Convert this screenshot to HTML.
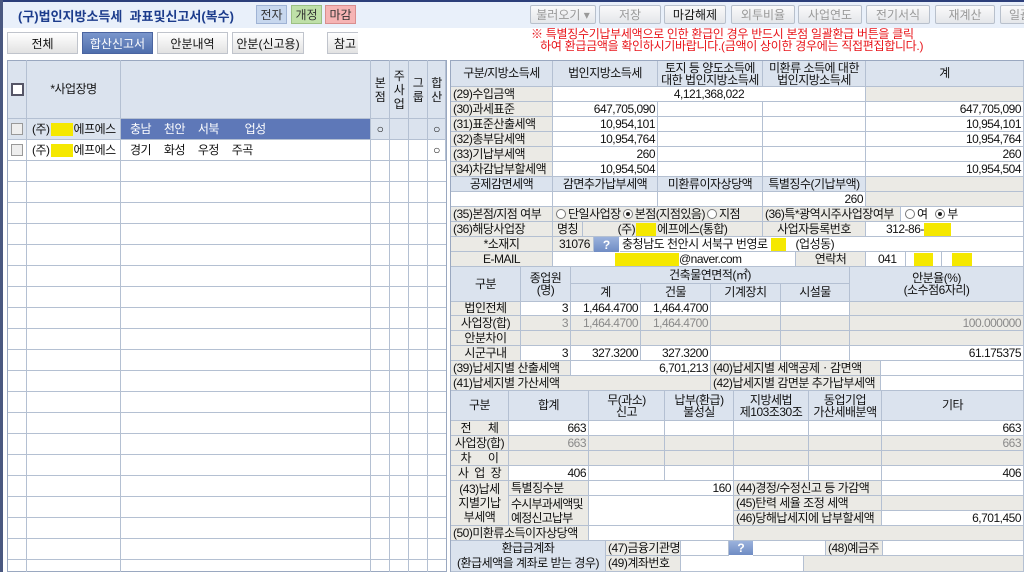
<!DOCTYPE html>
<html><head><meta charset="utf-8"><style>
*{margin:0;padding:0;box-sizing:border-box}
body{width:1024px;height:572px;overflow:hidden;background:#fff;position:relative;font-family:"Liberation Sans","Noto Sans CJK KR",sans-serif;font-size:12px;color:#111}
.a{position:absolute}
.c{position:absolute;display:flex;align-items:center;justify-content:center;border-right:1px solid #b4c0d2;border-bottom:1px solid #b4c0d2;white-space:nowrap;line-height:13px;overflow:hidden;font-size:12px;letter-spacing:-0.5px}
.l{justify-content:flex-start;padding-left:2px}
.r{justify-content:flex-end;padding-right:2px}
.g{background:#ebeae5}
.h{background:#dbe3ee}
.w{background:#fff}
.gt{color:#8a8a8a}
.ml{white-space:normal;text-align:center;line-height:12px}
.btn{position:absolute;top:5px;height:19px;border:1px solid #b8c0cc;border-radius:2px;background:linear-gradient(#fafafa,#e4e6ea);color:#999;font-size:12px;display:flex;align-items:center;justify-content:center}
.tab{position:absolute;top:32px;height:22px;border:1px solid #c0c4cc;background:linear-gradient(#fff,#e2e2e2);display:flex;align-items:center;justify-content:center;font-size:12px}
.y{display:inline-block;background:#f5e800;height:13px}
.rad{display:inline-block;width:10px;height:10px;border:1px solid #777;border-radius:50%;background:#fff;margin:0 2px;vertical-align:-1px;position:relative}
.rad.on::after{content:"";position:absolute;left:2px;top:2px;width:4px;height:4px;border-radius:50%;background:#222}
.q{position:absolute;background:linear-gradient(#9bb2dc,#6f8cc4);color:#fff;font-weight:bold;display:flex;align-items:center;justify-content:center;font-size:12px}
</style></head><body>
<div class="a" style="left:0;top:0;width:1024px;height:28px;background:#e9f0fa;border-top:2px solid #2c3f7a"></div>
<div class="a" style="left:0;top:0;width:3px;height:572px;background:#4a5880"></div>
<div class="a" style="left:18px;top:6px;font-size:13px;font-weight:bold;color:#1c3c8c">(구)법인지방소득세&nbsp; 과표및신고서(복수)</div>
<div class="a" style="left:256px;top:5px;width:31px;height:19px;background:#c7d7ee;border:1px solid #9fb3d5;display:flex;align-items:center;justify-content:center;color:#333">전자</div>
<div class="a" style="left:291px;top:5px;width:31px;height:19px;background:#bfe0a8;border:1px solid #9cc083;display:flex;align-items:center;justify-content:center;color:#333">개정</div>
<div class="a" style="left:325px;top:5px;width:31px;height:19px;background:#f6b4b4;border:1px solid #d98e8e;display:flex;align-items:center;justify-content:center;color:#333">마감</div>
<div class="btn" style="left:530px;width:66px">불러오기 ▾</div>
<div class="btn" style="left:599px;width:62px">저장</div>
<div class="btn" style="left:664px;width:62px;color:#111">마감해제</div>
<div class="btn" style="left:731px;width:64px">외투비율</div>
<div class="btn" style="left:798px;width:64px">사업연도</div>
<div class="btn" style="left:866px;width:64px">전기서식</div>
<div class="btn" style="left:935px;width:60px">재계산</div>
<div class="btn" style="left:1000px;width:40px">일괄</div>
<div class="a" style="left:531px;top:28px;color:#e8141a;font-size:12px;line-height:12px;letter-spacing:-0.3px">※ 특별징수기납부세액으로 인한 환급인 경우 반드시 본점 일괄환급 버튼을 클릭<br>&nbsp;&nbsp;&nbsp;하여 환급금액을 확인하시기바랍니다.(금액이 상이한 경우에는 직접편집합니다.)</div>
<div class="tab" style="left:7px;width:71px">전체</div>
<div class="tab" style="left:82px;width:71px;background:linear-gradient(#7a96cc,#4f6eac);color:#fff;border-color:#4a64a0">합산신고서</div>
<div class="tab" style="left:157px;width:71px">안분내역</div>
<div class="tab" style="left:232px;width:72px">안분(신고용)</div>
<div class="tab" style="left:327px;width:31px;justify-content:flex-end;padding-right:2px;border-right:none">참고</div>
<div class="a" style="left:7px;top:60px;width:440px;height:512px;border:1px solid #9aa8c0;background:#fff;
background-image:repeating-linear-gradient(to bottom,transparent 0,transparent 20px,#b4c0d2 20px,#b4c0d2 21px);background-position:0 100px"></div>
<div class="a" style="left:26px;top:60px;width:1px;height:512px;background:#b4c0d2"></div>
<div class="a" style="left:120px;top:60px;width:1px;height:512px;background:#b4c0d2"></div>
<div class="a" style="left:370px;top:60px;width:1px;height:512px;background:#b4c0d2"></div>
<div class="a" style="left:389px;top:60px;width:1px;height:512px;background:#b4c0d2"></div>
<div class="a" style="left:408px;top:60px;width:1px;height:512px;background:#b4c0d2"></div>
<div class="a" style="left:427px;top:60px;width:1px;height:512px;background:#b4c0d2"></div>
<div class="c h" style="left:8px;top:61px;width:19px;height:58px"><span style="display:inline-block;width:13px;height:13px;border:2px solid #556;background:#fff"></span></div>
<div class="c h" style="left:27px;top:61px;width:94px;height:58px">*사업장명</div>
<div class="c h" style="left:121px;top:61px;width:250px;height:58px"></div>
<div class="c h ml" style="left:371px;top:61px;width:19px;height:58px;line-height:14px">본<br>점</div>
<div class="c h ml" style="left:390px;top:61px;width:19px;height:58px;line-height:14px">주<br>사<br>업</div>
<div class="c h ml" style="left:409px;top:61px;width:19px;height:58px;line-height:14px">그<br>룹</div>
<div class="c h ml" style="left:428px;top:61px;width:18px;height:58px;line-height:14px">합<br>산</div>
<div class="c h" style="left:8px;top:119px;width:19px;height:21px"><span style="display:inline-block;width:12px;height:12px;border:1px solid #999;background:#eee"></span></div>
<div class="c h l" style="left:27px;top:119px;width:94px;height:21px;padding-left:5px">(주)<span class="y" style="width:22px;margin:0 1px"></span>에프에스</div>
<div class="c l" style="left:121px;top:119px;width:250px;height:21px;background:#5e78b8;color:#fff;padding-left:9px;word-spacing:10px">충남 천안 서북 &nbsp;업성</div>
<div class="c h" style="left:371px;top:119px;width:19px;height:21px">○</div>
<div class="c h" style="left:390px;top:119px;width:19px;height:21px"></div>
<div class="c h" style="left:409px;top:119px;width:19px;height:21px"></div>
<div class="c h" style="left:428px;top:119px;width:18px;height:21px">○</div>
<div class="c w" style="left:8px;top:140px;width:19px;height:21px"><span style="display:inline-block;width:12px;height:12px;border:1px solid #999;background:#eee"></span></div>
<div class="c w l" style="left:27px;top:140px;width:94px;height:21px;padding-left:5px">(주)<span class="y" style="width:22px;margin:0 1px"></span>에프에스</div>
<div class="c w l" style="left:121px;top:140px;width:250px;height:21px;padding-left:9px;word-spacing:10px">경기 화성 우정 주곡</div>
<div class="c w" style="left:371px;top:140px;width:19px;height:21px"></div>
<div class="c w" style="left:390px;top:140px;width:19px;height:21px"></div>
<div class="c w" style="left:409px;top:140px;width:19px;height:21px"></div>
<div class="c w" style="left:428px;top:140px;width:18px;height:21px">○</div>

<div class="a" style="left:450px;top:60px;width:574px;height:512px;border-left:1px solid #9aa8c0;border-top:1px solid #9aa8c0;background:#fff"></div>
<div class="c h" style="left:451px;top:61px;width:102px;height:26px">구분/지방소득세</div>
<div class="c h" style="left:553px;top:61px;width:105px;height:26px">법인지방소득세</div>
<div class="c h ml" style="left:658px;top:61px;width:105px;height:26px">토지 등 양도소득에<br>대한 법인지방소득세</div>
<div class="c h ml" style="left:763px;top:61px;width:103px;height:26px">미환류 소득에 대한<br>법인지방소득세</div>
<div class="c h" style="left:866px;top:61px;width:158px;height:26px">계</div>

<div class="c g l" style="left:451px;top:87px;width:102px;height:15px">(29)수입금액</div>
<div class="c w" style="left:553px;top:87px;width:313px;height:15px">4,121,368,022</div>
<div class="c g" style="left:866px;top:87px;width:158px;height:15px"></div>

<div class="c g l" style="left:451px;top:102px;width:102px;height:15px">(30)과세표준</div>
<div class="c w r" style="left:553px;top:102px;width:105px;height:15px">647,705,090</div>
<div class="c w" style="left:658px;top:102px;width:105px;height:15px"></div>
<div class="c w" style="left:763px;top:102px;width:103px;height:15px"></div>
<div class="c w r" style="left:866px;top:102px;width:158px;height:15px">647,705,090</div>

<div class="c g l" style="left:451px;top:117px;width:102px;height:15px">(31)표준산출세액</div>
<div class="c w r" style="left:553px;top:117px;width:105px;height:15px">10,954,101</div>
<div class="c w" style="left:658px;top:117px;width:105px;height:15px"></div>
<div class="c w" style="left:763px;top:117px;width:103px;height:15px"></div>
<div class="c w r" style="left:866px;top:117px;width:158px;height:15px">10,954,101</div>

<div class="c g l" style="left:451px;top:132px;width:102px;height:15px">(32)총부담세액</div>
<div class="c w r" style="left:553px;top:132px;width:105px;height:15px">10,954,764</div>
<div class="c w" style="left:658px;top:132px;width:105px;height:15px"></div>
<div class="c w" style="left:763px;top:132px;width:103px;height:15px"></div>
<div class="c w r" style="left:866px;top:132px;width:158px;height:15px">10,954,764</div>

<div class="c g l" style="left:451px;top:147px;width:102px;height:15px">(33)기납부세액</div>
<div class="c w r" style="left:553px;top:147px;width:105px;height:15px">260</div>
<div class="c w" style="left:658px;top:147px;width:105px;height:15px"></div>
<div class="c w" style="left:763px;top:147px;width:103px;height:15px"></div>
<div class="c w r" style="left:866px;top:147px;width:158px;height:15px">260</div>

<div class="c g l" style="left:451px;top:162px;width:102px;height:15px">(34)차감납부할세액</div>
<div class="c w r" style="left:553px;top:162px;width:105px;height:15px">10,954,504</div>
<div class="c w" style="left:658px;top:162px;width:105px;height:15px"></div>
<div class="c w" style="left:763px;top:162px;width:103px;height:15px"></div>
<div class="c w r" style="left:866px;top:162px;width:158px;height:15px">10,954,504</div>

<div class="c h" style="left:451px;top:177px;width:102px;height:15px">공제감면세액</div>
<div class="c h" style="left:553px;top:177px;width:105px;height:15px">감면추가납부세액</div>
<div class="c h" style="left:658px;top:177px;width:105px;height:15px">미환류이자상당액</div>
<div class="c h" style="left:763px;top:177px;width:103px;height:15px">특별징수(기납부액)</div>
<div class="c g" style="left:866px;top:177px;width:158px;height:15px"></div>
<div class="c w" style="left:451px;top:192px;width:102px;height:15px"></div>
<div class="c w" style="left:553px;top:192px;width:105px;height:15px"></div>
<div class="c w" style="left:658px;top:192px;width:105px;height:15px"></div>
<div class="c w r" style="left:763px;top:192px;width:103px;height:15px">260</div>
<div class="c g" style="left:866px;top:192px;width:158px;height:15px"></div>

<div class="c g l" style="left:451px;top:207px;width:102px;height:15px">(35)본점/지점 여부</div>
<div class="c g l" style="left:553px;top:207px;width:210px;height:15px;padding-left:1px"><span class="rad"></span>단일사업장<span class="rad on"></span>본점(지점있음)<span class="rad"></span>지점</div>
<div class="c g l" style="left:763px;top:207px;width:138px;height:15px">(36)특*광역시주사업장여부</div>
<div class="c w l" style="left:901px;top:207px;width:123px;height:15px"><span class="rad"></span>여 &nbsp;<span class="rad on"></span>부</div>

<div class="c g l" style="left:451px;top:222px;width:102px;height:15px">(36)해당사업장</div>
<div class="c g" style="left:553px;top:222px;width:30px;height:15px">명칭</div>
<div class="c g" style="left:583px;top:222px;width:180px;height:15px">(주)<span class="y" style="width:20px;margin:0 1px"></span>에프에스(통합)</div>
<div class="c g" style="left:763px;top:222px;width:103px;height:15px">사업자등록번호</div>
<div class="c w l" style="left:866px;top:222px;width:158px;height:15px;padding-left:20px">312-86-<span class="y" style="width:27px"></span></div>

<div class="c g" style="left:451px;top:237px;width:102px;height:15px">*소재지</div>
<div class="c g l" style="left:553px;top:237px;width:41px;height:15px;padding-left:6px">31076</div>
<div class="q" style="left:594px;top:237px;width:25px;height:15px">?</div>
<div class="c w l" style="left:620px;top:237px;width:404px;height:15px">충청남도 천안시 서북구 번영로 <span class="y" style="width:15px;margin:0 10px 0 3px"></span> (업성동)</div>

<div class="c g" style="left:451px;top:252px;width:102px;height:15px">E-MAIL</div>
<div class="c w l" style="left:553px;top:252px;width:243px;height:15px;padding-left:62px"><span class="y" style="width:64px"></span>@naver.com</div>
<div class="c g" style="left:796px;top:252px;width:70px;height:15px">연락처</div>
<div class="c w l" style="left:866px;top:252px;width:40px;height:15px;padding-left:12px">041</div>
<div class="c w" style="left:906px;top:252px;width:36px;height:15px"><span class="y" style="width:19px"></span></div>
<div class="c w" style="left:942px;top:252px;width:82px;height:15px;justify-content:flex-start;padding-left:10px"><span class="y" style="width:20px"></span></div>

<div class="c h" style="left:451px;top:267px;width:70px;height:35px">구분</div>
<div class="c h ml" style="left:521px;top:267px;width:50px;height:35px">종업원<br>(명)</div>
<div class="c h" style="left:571px;top:267px;width:279px;height:17px">건축물연면적(㎡)</div>
<div class="c h" style="left:571px;top:284px;width:70px;height:18px">계</div>
<div class="c h" style="left:641px;top:284px;width:70px;height:18px">건물</div>
<div class="c h" style="left:711px;top:284px;width:70px;height:18px">기계장치</div>
<div class="c h" style="left:781px;top:284px;width:69px;height:18px">시설물</div>
<div class="c h ml" style="left:850px;top:267px;width:174px;height:35px">안분율(%)<br>(소수점6자리)</div>

<div class="c g" style="left:451px;top:302px;width:70px;height:14px">법인전체</div>
<div class="c w r" style="left:521px;top:302px;width:50px;height:14px">3</div>
<div class="c w r" style="left:571px;top:302px;width:70px;height:14px">1,464.4700</div>
<div class="c w r" style="left:641px;top:302px;width:70px;height:14px">1,464.4700</div>
<div class="c w" style="left:711px;top:302px;width:70px;height:14px"></div>
<div class="c w" style="left:781px;top:302px;width:69px;height:14px"></div>
<div class="c g" style="left:850px;top:302px;width:174px;height:14px"></div>

<div class="c g" style="left:451px;top:316px;width:70px;height:15px">사업장(합)</div>
<div class="c g r gt" style="left:521px;top:316px;width:50px;height:15px">3</div>
<div class="c g r gt" style="left:571px;top:316px;width:70px;height:15px">1,464.4700</div>
<div class="c g r gt" style="left:641px;top:316px;width:70px;height:15px">1,464.4700</div>
<div class="c g" style="left:711px;top:316px;width:70px;height:15px"></div>
<div class="c g" style="left:781px;top:316px;width:69px;height:15px"></div>
<div class="c g r gt" style="left:850px;top:316px;width:174px;height:15px">100.000000</div>

<div class="c g" style="left:451px;top:331px;width:70px;height:15px">안분차이</div>
<div class="c g" style="left:521px;top:331px;width:50px;height:15px"></div>
<div class="c g" style="left:571px;top:331px;width:70px;height:15px"></div>
<div class="c g" style="left:641px;top:331px;width:70px;height:15px"></div>
<div class="c g" style="left:711px;top:331px;width:70px;height:15px"></div>
<div class="c g" style="left:781px;top:331px;width:69px;height:15px"></div>
<div class="c g" style="left:850px;top:331px;width:174px;height:15px"></div>

<div class="c g" style="left:451px;top:346px;width:70px;height:15px">시군구내</div>
<div class="c w r" style="left:521px;top:346px;width:50px;height:15px">3</div>
<div class="c w r" style="left:571px;top:346px;width:70px;height:15px">327.3200</div>
<div class="c w r" style="left:641px;top:346px;width:70px;height:15px">327.3200</div>
<div class="c w" style="left:711px;top:346px;width:70px;height:15px"></div>
<div class="c w" style="left:781px;top:346px;width:69px;height:15px"></div>
<div class="c w r" style="left:850px;top:346px;width:174px;height:15px">61.175375</div>

<div class="c g l" style="left:451px;top:361px;width:120px;height:15px">(39)납세지별 산출세액</div>
<div class="c w r" style="left:571px;top:361px;width:140px;height:15px">6,701,213</div>
<div class="c g l" style="left:711px;top:361px;width:170px;height:15px">(40)납세지별 세액공제ㆍ감면액</div>
<div class="c w" style="left:881px;top:361px;width:143px;height:15px"></div>
<div class="c g l" style="left:451px;top:376px;width:260px;height:15px">(41)납세지별 가산세액</div>
<div class="c g l" style="left:711px;top:376px;width:170px;height:15px">(42)납세지별 감면분 추가납부세액</div>
<div class="c w" style="left:881px;top:376px;width:143px;height:15px"></div>

<div class="c h" style="left:451px;top:391px;width:58px;height:30px">구분</div>
<div class="c h" style="left:509px;top:391px;width:80px;height:30px">합계</div>
<div class="c h ml" style="left:589px;top:391px;width:76px;height:30px">무(과소)<br>신고</div>
<div class="c h ml" style="left:665px;top:391px;width:69px;height:30px">납부(환급)<br>불성실</div>
<div class="c h ml" style="left:734px;top:391px;width:75px;height:30px">지방세법<br>제103조30조</div>
<div class="c h ml" style="left:809px;top:391px;width:73px;height:30px">동업기업<br>가산세배분액</div>
<div class="c h" style="left:882px;top:391px;width:142px;height:30px">기타</div>

<div class="c g" style="left:451px;top:421px;width:58px;height:15px;word-spacing:14px">전 체</div>
<div class="c w r" style="left:509px;top:421px;width:80px;height:15px">663</div>
<div class="c w" style="left:589px;top:421px;width:76px;height:15px"></div>
<div class="c w" style="left:665px;top:421px;width:69px;height:15px"></div>
<div class="c w" style="left:734px;top:421px;width:75px;height:15px"></div>
<div class="c w" style="left:809px;top:421px;width:73px;height:15px"></div>
<div class="c w r" style="left:882px;top:421px;width:142px;height:15px">663</div>

<div class="c g" style="left:451px;top:436px;width:58px;height:15px">사업장(합)</div>
<div class="c g r gt" style="left:509px;top:436px;width:80px;height:15px">663</div>
<div class="c g" style="left:589px;top:436px;width:76px;height:15px"></div>
<div class="c g" style="left:665px;top:436px;width:69px;height:15px"></div>
<div class="c g" style="left:734px;top:436px;width:75px;height:15px"></div>
<div class="c g" style="left:809px;top:436px;width:73px;height:15px"></div>
<div class="c g r gt" style="left:882px;top:436px;width:142px;height:15px">663</div>

<div class="c g" style="left:451px;top:451px;width:58px;height:15px;word-spacing:14px">차 이</div>
<div class="c g" style="left:509px;top:451px;width:80px;height:15px"></div>
<div class="c g" style="left:589px;top:451px;width:76px;height:15px"></div>
<div class="c g" style="left:665px;top:451px;width:69px;height:15px"></div>
<div class="c g" style="left:734px;top:451px;width:75px;height:15px"></div>
<div class="c g" style="left:809px;top:451px;width:73px;height:15px"></div>
<div class="c g" style="left:882px;top:451px;width:142px;height:15px"></div>

<div class="c g" style="left:451px;top:466px;width:58px;height:15px;word-spacing:3px">사 업 장</div>
<div class="c w r" style="left:509px;top:466px;width:80px;height:15px">406</div>
<div class="c w" style="left:589px;top:466px;width:76px;height:15px"></div>
<div class="c w" style="left:665px;top:466px;width:69px;height:15px"></div>
<div class="c w" style="left:734px;top:466px;width:75px;height:15px"></div>
<div class="c w" style="left:809px;top:466px;width:73px;height:15px"></div>
<div class="c w r" style="left:882px;top:466px;width:142px;height:15px">406</div>

<div class="c g ml" style="left:451px;top:481px;width:58px;height:45px;line-height:14px">(43)납세<br>지별기납<br>부세액</div>
<div class="c g l" style="left:509px;top:481px;width:80px;height:15px">특별징수분</div>
<div class="c w r" style="left:589px;top:481px;width:145px;height:15px">160</div>
<div class="c g l" style="left:734px;top:481px;width:148px;height:15px">(44)경정/수정신고 등 가감액</div>
<div class="c w" style="left:882px;top:481px;width:142px;height:15px"></div>
<div class="c g l" style="left:509px;top:496px;width:80px;height:30px;white-space:normal;line-height:14px;letter-spacing:-0.8px">수시부과세액및<br>예정신고납부</div>
<div class="c w" style="left:589px;top:496px;width:145px;height:30px"></div>
<div class="c g l" style="left:734px;top:496px;width:148px;height:15px">(45)탄력 세율 조정 세액</div>
<div class="c g" style="left:882px;top:496px;width:142px;height:15px"></div>
<div class="c g l" style="left:734px;top:511px;width:148px;height:15px">(46)당해납세지에 납부할세액</div>
<div class="c w r" style="left:882px;top:511px;width:142px;height:15px">6,701,450</div>

<div class="c g l" style="left:451px;top:526px;width:138px;height:15px">(50)미환류소득이자상당액</div>
<div class="c w" style="left:589px;top:526px;width:145px;height:15px"></div>
<div class="c g" style="left:734px;top:526px;width:290px;height:15px"></div>

<div class="c h ml" style="left:451px;top:541px;width:155px;height:31px;line-height:15px">환급금계좌<br>(환급세액을 계좌로 받는 경우)</div>
<div class="c g l" style="left:606px;top:541px;width:75px;height:15px">(47)금융기관명</div>
<div class="c w" style="left:681px;top:541px;width:48px;height:15px"></div>
<div class="q" style="left:729px;top:541px;width:24px;height:14px">?</div>
<div class="c w" style="left:753px;top:541px;width:73px;height:15px"></div>
<div class="c g l" style="left:826px;top:541px;width:57px;height:15px">(48)예금주</div>
<div class="c w" style="left:883px;top:541px;width:141px;height:15px"></div>
<div class="c g l" style="left:606px;top:556px;width:75px;height:16px">(49)계좌번호</div>
<div class="c w" style="left:681px;top:556px;width:123px;height:16px"></div>
<div class="c g" style="left:804px;top:556px;width:220px;height:16px"></div>
</body></html>
